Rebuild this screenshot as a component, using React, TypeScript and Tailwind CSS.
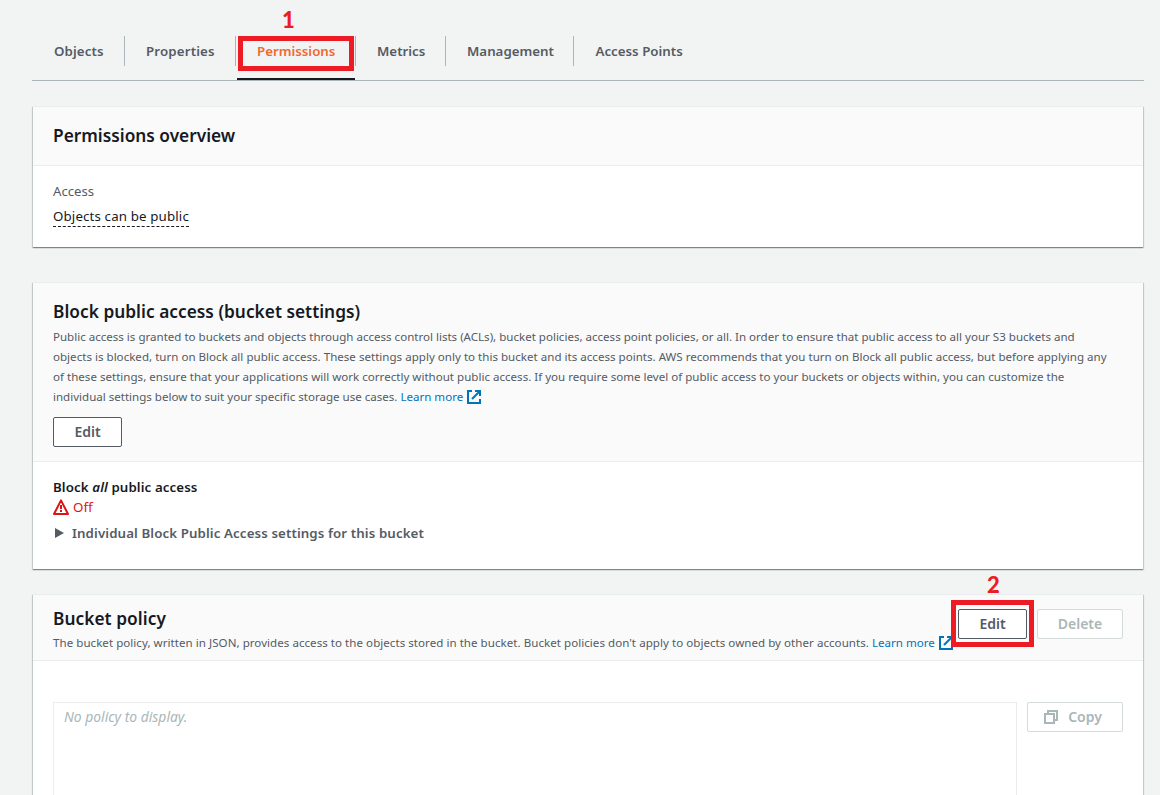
import type { ReactNode } from "react";

function ExternalIcon() {
  return (
    <svg width="14" height="14" viewBox="0 0 14 14" fill="none" stroke="#0073bb" strokeWidth="2" className="inline-block shrink-0">
      <path d="M5 1H1v12h12V9" />
      <path d="M8 1h5v5M13 1L5 9" />
    </svg>
  );
}

function WarningIcon() {
  return (
    <svg width="16" height="16" viewBox="0 0 16 16" fill="none" stroke="#d91515" strokeWidth="2" strokeLinejoin="round">
      <path d="M8 1.4L15 15H1z" />
      <path d="M8 6v4M8 11v2" />
    </svg>
  );
}

function CopyIcon() {
  return (
    <svg width="14" height="14" viewBox="0 0 14 14" fill="none" stroke="#aab7b8" strokeWidth="2">
      <path d="M1 4h9v9H1z" />
      <path d="M4 4V1h9v9h-3" />
    </svg>
  );
}

function Tab({ label, className, last }: { label: string; className: string; last?: boolean }) {
  return (
    <div className={`flex h-[30px] shrink-0 items-center pt-px whitespace-nowrap ${last ? "" : "border-r border-[#aab7b8]"} ${className}`}>
      {label}
    </div>
  );
}

function Card({ className, children }: { className: string; children: ReactNode }) {
  return (
    <section
      className={`mx-px border-t border-[#eaeded] bg-white shadow-[0_1px_1px_0_rgba(0,28,36,0.3),1px_1px_1px_0_rgba(0,28,36,0.15),-1px_1px_1px_0_rgba(0,28,36,0.15)] ${className}`}
    >
      {children}
    </section>
  );
}

const button = "flex h-[30px] items-center justify-center rounded-[2px] border bg-white text-[14px] leading-5 font-semibold";

export default function App() {
  return (
    <div className="h-[795px] overflow-hidden bg-[#f2f3f3] pr-4 pl-8 font-['Noto_Sans','Open_Sans',sans-serif] text-[13.3px] text-[#16191f]">
      <nav className="flex h-[81px] border-b border-[#aab7b8] pt-9 text-[13.3px] font-semibold text-[#545b64]">
        <Tab label="Objects" className="w-[93px] pl-[22px] tracking-[0.1px]" />
        <Tab label="Properties" className="w-[111px] pl-[21px] tracking-[0.15px]" />
        <div className="relative">
          <Tab label="Permissions" className="w-[120px] pl-[21px] text-[#f0692f]" />
          <div className="absolute top-[42px] left-px h-[2px] w-[118px] bg-[#16191f]" />
          <div className="absolute top-0 left-[2px] h-[35px] w-[116px] border-[5px] border-[#ed1c24]" />
          <div className="absolute -top-[28px] left-[46px] font-['Lato',sans-serif] text-[22px] leading-6 font-black text-[#ed1c24]">1</div>
        </div>
        <Tab label="Metrics" className="w-[90px] pl-[21px]" />
        <Tab label="Management" className="w-[128px] pl-[21px]" />
        <Tab label="Access Points" className="pl-[21.5px]" last />
      </nav>

      <Card className="mt-[25px] h-[141px]">
        <header className="flex h-[59px] items-center border-b border-[#eaeded] bg-[#fafafa] pl-5">
          <h2 className="text-[17.3px] font-semibold">Permissions overview</h2>
        </header>
        <div className="flex flex-col items-start pt-[15px] pl-5">
          <div className="text-[13.2px] leading-5 text-[#545b64]">Access</div>
          <div className="mt-[5px] h-[21px] border-b border-dashed border-[#16191f] leading-5 tracking-[0.14px]">Objects can be public</div>
        </div>
      </Card>

      <Card className="mt-[35px] h-[287px]">
        <header className="h-[179px] border-b border-[#eaeded] bg-[#fafafa] pt-[18px] pl-5">
          <h2 className="text-[17.3px] leading-[22px] font-semibold tracking-[0.02px]">Block public access (bucket settings)</h2>
          <div className="mt-1 text-[11.55px] leading-5 whitespace-nowrap text-[#545b64]">
            <p>Public access is granted to buckets and objects through access control lists (ACLs), bucket policies, access point policies, or all. In order to ensure that public access to all your S3 buckets and</p>
            <p className="tracking-[0.016px]">objects is blocked, turn on Block all public access. These settings apply only to this bucket and its access points. AWS recommends that you turn on Block all public access, but before applying any</p>
            <p className="tracking-[0.011px]">of these settings, ensure that your applications will work correctly without public access. If you require some level of public access to your buckets or objects within, you can customize the</p>
            <p className="flex items-center">
              <span>individual settings below to suit your specific storage use cases.&nbsp;</span>
              <a className="mr-1 text-[#0073bb]">Learn more</a>
              <ExternalIcon />
            </p>
          </div>
          <button className={`${button} mt-[10px] w-[69px] border-[#545b64] text-[#545b64]`}>Edit</button>
        </header>
        <div className="pt-[15px] pl-5">
          <div className="leading-5 font-semibold tracking-[0.1px]">Block <em>all</em> public access</div>
          <div className="flex h-5 items-center gap-1 text-[#d91515]">
            <WarningIcon />
            <span className="pt-px">Off</span>
          </div>
          <div className="mt-[6px] flex h-5 items-center font-semibold text-[#545b64]">
            <svg width="10" height="10" viewBox="0 0 10 10" className="mr-[7px] ml-[2px]">
              <path d="M0 0l9 5-9 5z" fill="#545b64" />
            </svg>
            <span className="pt-px tracking-[0.1px]">Individual Block Public Access settings for this bucket</span>
          </div>
        </div>
      </Card>

      <Card className="mt-[25px] h-[240px]">
        <header className="flex h-[66px] justify-between border-b border-[#eaeded] bg-[#fafafa] pr-5 pl-5">
          <div className="w-0 pt-[13px] whitespace-nowrap">
            <h2 className="text-[17.3px] leading-[22px] font-semibold tracking-[0.05px]">Bucket policy</h2>
            <div className="mt-[3px] flex items-center text-[11.55px] leading-5 text-[#545b64]">
              <span className="tracking-[0.042px]">The bucket policy, written in JSON, provides access to the objects stored in the bucket. Bucket policies don't apply to objects owned by other accounts.&nbsp;</span>
              <a className="mr-1 text-[#0073bb]">Learn more</a>
              <ExternalIcon />
            </div>
          </div>
          <div className="flex gap-[10px] pt-[14px]">
            <div className="relative">
              <button className={`${button} w-[69px] border-[#545b64] text-[#545b64]`}>Edit</button>
              <div className="absolute -top-[9px] -left-[7px] h-[47px] w-[83px] border-[5px] border-[#ed1c24]" />
              <div className="absolute -top-[36px] left-[29px] font-['Lato',sans-serif] text-[22px] leading-6 font-black text-[#ed1c24]">2</div>
            </div>
            <button className={`${button} w-[86px] border-[#d5dbdb] text-[#aab7b8]`}>Delete</button>
          </div>
        </header>
        <div className="flex gap-[10px] px-5 pt-[41px]">
          <div className="h-[120px] w-[964px] border border-[#eaeded] px-[10px] py-1 text-[13.9px] leading-5 text-[#aab7b8] italic">No policy to display.</div>
          <button className={`${button} w-24 gap-[10px] border-[#d5dbdb] pr-1 text-[#aab7b8]`}>
            <CopyIcon />
            <span>Copy</span>
          </button>
        </div>
      </Card>
    </div>
  );
}
